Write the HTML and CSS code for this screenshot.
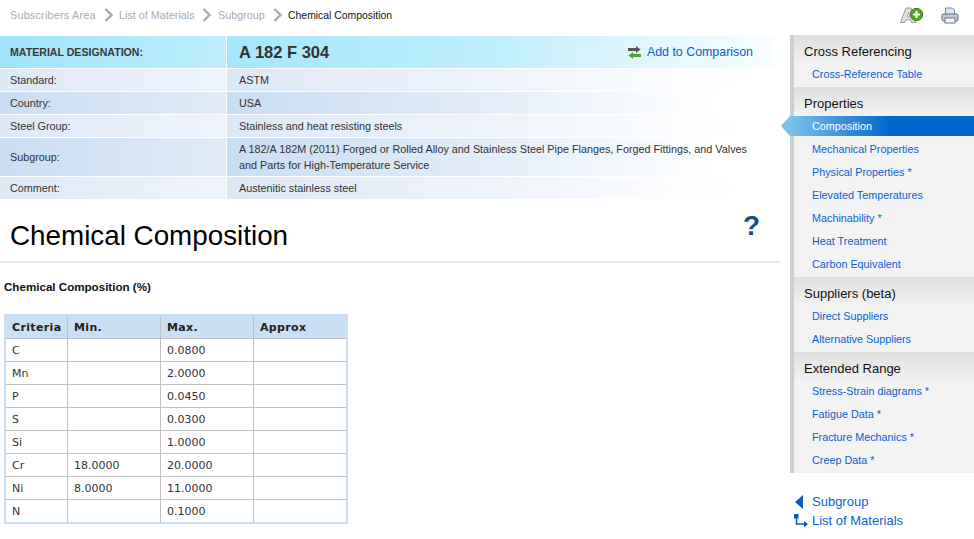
FILE: index.html
```html
<!DOCTYPE html>
<html lang="en">
<head>
<meta charset="utf-8">
<title>Chemical Composition</title>
<link rel="stylesheet" href="styles.css">
</head>
<body>
<header class="topbar">
  <nav class="crumbs">
    <a href="#">Subscribers Area</a>
    <svg class="chev" width="9" height="14" viewBox="0 0 9 14"><path d="M1.500 1 7.500 7 1.500 13" fill="none" stroke="#ababab" stroke-width="2.400"/></svg>
    <a href="#">List of Materials</a>
    <svg class="chev" width="9" height="14" viewBox="0 0 9 14"><path d="M1.500 1 7.500 7 1.500 13" fill="none" stroke="#ababab" stroke-width="2.400"/></svg>
    <a href="#">Subgroup</a>
    <svg class="chev" width="9" height="14" viewBox="0 0 9 14"><path d="M1.500 1 7.500 7 1.500 13" fill="none" stroke="#ababab" stroke-width="2.400"/></svg>
    <span class="here">Chemical Composition</span>
  </nav>
  <div class="tools">
    <svg width="23" height="16" viewBox="0 0 23 16">
      <path d="M.500 15.500 6 1h5l5 14.500h-4.500l-.8-2.700H6l-.9 2.700Z" fill="#e2e2e2" stroke="#9a9a9a"/>
      <path d="M7 9.800h2.800L8.400 5.500Z" fill="#fff" stroke="#9a9a9a" stroke-width=".7"/>
      <circle cx="16.500" cy="7.500" r="6.200" fill="#4da52a" stroke="#34801a"/>
      <path d="M16.500 4v7M13 7.500h7" stroke="#fff" stroke-width="2.200"/>
    </svg>
    <svg width="18" height="17" viewBox="0 0 18 17">
      <path d="M4.500 1h7l2 2v5h-9Z" fill="#d9e8f6" stroke="#6f8cab"/>
      <rect x="1" y="7" width="16" height="7" rx="1.500" fill="#c4c8cc" stroke="#5f6a74"/>
      <rect x="4" y="11" width="10" height="5" fill="#f4f6f8" stroke="#6f7a84"/>
    </svg>
  </div>
</header>

<div class="page">
  <main class="main">
    <section class="info">
      <div class="row head">
        <div class="label">MATERIAL DESIGNATION:</div>
        <div class="value">
          <span class="grade">A 182 F 304</span>
          <a class="compare" href="#">
            <svg width="13" height="13" viewBox="0 0 13 13">
              <path d="M0 2h8V0l4.500 3.500L8 7V5H0Z" fill="#555"/>
              <path d="M13 8H5V6L.5 9.500 5 13v-2h8Z" fill="#54a12c"/>
            </svg>
            Add to Comparison
          </a>
        </div>
      </div>
      <div class="row light"><div class="label">Standard:</div><div class="value">ASTM</div></div>
      <div class="row dark"><div class="label">Country:</div><div class="value">USA</div></div>
      <div class="row light"><div class="label">Steel Group:</div><div class="value">Stainless and heat resisting steels</div></div>
      <div class="row dark tall"><div class="label">Subgroup:</div><div class="value">A 182/A 182M (2011) Forged or Rolled Alloy and Stainless Steel Pipe Flanges, Forged Fittings, and Valves<br>and Parts for High-Temperature Service</div></div>
      <div class="row light"><div class="label">Comment:</div><div class="value">Austenitic stainless steel</div></div>
    </section>

    <div class="title-row">
      <h1>Chemical Composition</h1>
      <span class="help">?</span>
    </div>

    <h2>Chemical Composition (%)</h2>

    <table class="comp">
      <thead>
        <tr><th class="c1">Criteria</th><th class="c2">Min.</th><th class="c3">Max.</th><th class="c4">Approx</th></tr>
      </thead>
      <tbody>
        <tr><td>C</td><td></td><td>0.0800</td><td></td></tr>
        <tr><td>Mn</td><td></td><td>2.0000</td><td></td></tr>
        <tr><td>P</td><td></td><td>0.0450</td><td></td></tr>
        <tr><td>S</td><td></td><td>0.0300</td><td></td></tr>
        <tr><td>Si</td><td></td><td>1.0000</td><td></td></tr>
        <tr><td>Cr</td><td>18.0000</td><td>20.0000</td><td></td></tr>
        <tr><td>Ni</td><td>8.0000</td><td>11.0000</td><td></td></tr>
        <tr><td>N</td><td></td><td>0.1000</td><td></td></tr>
      </tbody>
    </table>
  </main>

  <aside class="side">
    <div class="menu">
      <section class="group">
        <h3>Cross Referencing</h3>
        <a href="#">Cross-Reference Table</a>
      </section>
      <section class="group">
        <h3>Properties</h3>
        <a class="active" href="#">Composition</a>
        <a href="#">Mechanical Properties</a>
        <a href="#">Physical Properties *</a>
        <a href="#">Elevated Temperatures</a>
        <a href="#">Machinability *</a>
        <a href="#">Heat Treatment</a>
        <a href="#">Carbon Equivalent</a>
      </section>
      <section class="group">
        <h3>Suppliers (beta)</h3>
        <a href="#">Direct Suppliers</a>
        <a href="#">Alternative Suppliers</a>
      </section>
      <section class="group">
        <h3>Extended Range</h3>
        <a href="#">Stress-Strain diagrams *</a>
        <a href="#">Fatigue Data *</a>
        <a href="#">Fracture Mechanics *</a>
        <a href="#">Creep Data *</a>
      </section>
    </div>
    <div class="back">
      <a href="#">
        <span class="ico"><svg width="10" height="14" viewBox="0 0 10 14"><path d="M9 0v14L1 7Z" fill="#0a5cc0"/></svg></span>
        Subgroup
      </a>
      <a href="#">
        <span class="ico"><svg width="14" height="14" viewBox="0 0 14 14"><path d="M0 0h4.500v4.500H0Z" fill="#0a5cc0"/><path d="M2.500 4v6h8" fill="none" stroke="#0a5cc0" stroke-width="1.500"/><path d="M10 7 14 10 10 13.500Z" fill="#0a5cc0"/></svg></span>
        List of Materials
      </a>
    </div>
  </aside>
</div>
</body>
</html>
```

FILE: styles.css
```css
* { box-sizing: border-box; }
html, body { margin: 0; padding: 0; }
body {
  width: 974px;
  height: 539px;
  overflow: hidden;
  background: #fff;
  font-family: "Liberation Sans", Arial, sans-serif;
  font-size: 10.800px;
  color: #333;
}
a { text-decoration: none; }

.topbar {
  height: 35px;
  display: flex;
  align-items: center;
  justify-content: space-between;
  padding: 0 15px 5px 10px;
}
.crumbs { display: flex; align-items: center; font-size: 10.800px; }
.crumbs a { color: #aaa; }
.crumbs a:first-child { letter-spacing: .22px; }
.chev { margin: 0 6.500px 0 7.800px; }
.here { color: #111; font-size: 10.400px; }
.tools { display: flex; align-items: center; gap: 18px; }

.page { display: flex; gap: 10px; align-items: flex-start; }
.main { width: 780px; flex: none; padding-top: 1px; }

.row { display: flex; height: 23px; border-bottom: 1px solid #fff; }
.row.tall { height: 39px; }
.row.head { height: 33px; }
.label {
  width: 227px;
  flex: none;
  padding-left: 10px;
  display: flex;
  align-items: center;
  border-right: 1px solid #fff;
}
.value {
  flex: 1;
  padding-left: 12px;
  display: flex;
  flex-wrap: wrap;
  align-items: center;
  align-content: center;
}
.row.tall .value { display: block; line-height: 16px; padding-top: 0; }

.head .label {
  background: linear-gradient(90deg, #9fe3fb, #bdeefd);
  font-size: 10.600px;
  font-weight: bold;
  color: #3a3a3a;
}
.head .value {
  background: linear-gradient(90deg, #a6e6fb 0%, #bdeefd 46%, #dcf5fe 71%, #f6fdff 98%, #fff 100%);
  justify-content: space-between;
  padding-right: 27px;
}
.grade { font-size: 16.500px; font-weight: bold; color: #333; }
.compare {
  display: flex;
  align-items: center;
  gap: 6px;
  font-size: 12.400px;
  color: #0a5fd0;
}
.light .label { background: linear-gradient(90deg, #dee9f7, #eef4fc); }
.light .value { background: linear-gradient(90deg, #dde8f6, #fff 95%); }
.dark .label { background: linear-gradient(90deg, #c9ddf3, #e2ecf8); }
.dark .value { background: linear-gradient(90deg, #c9ddf3, #e2ecf8 45%, #fff 90%); }

.title-row {
  height: 63px;
  display: flex;
  justify-content: space-between;
  padding: 18px 20px 0 10px;
  border-bottom: 2px solid #e6e6e6;
}
h1 {
  margin: 0;
  font-size: 27.800px;
  font-weight: normal;
  line-height: 36px;
  color: #000;
}
.help {
  font-size: 28px;
  font-weight: bold;
  line-height: 24px;
  margin-top: -4px;
  color: #14508f;
}
h2 {
  margin: 17px 0 0 4px;
  font-size: 11.600px;
  line-height: 14px;
  font-weight: bold;
  color: #111;
}
.comp {
  margin: 20px 0 0 4px;
  width: 344px;
  table-layout: fixed;
  border-collapse: separate;
  border-spacing: 0;
  border: 2px solid #c9dff3;
  font-family: "DejaVu Sans", Verdana, sans-serif;
  font-size: 11px;
  color: #333;
}
.comp th, .comp td {
  height: 23px;
  padding: 0 0 0 6px;
  text-align: left;
  border-right: 1px solid #c0c0c0;
  border-bottom: 1px solid #c0c0c0;
  font-weight: normal;
}
.comp tr > :last-child { border-right: 0; }
.comp tbody tr:last-child td { border-bottom: 0; height: 22px; }
.comp th {
  background: #c9dff3;
  font-weight: bold;
  letter-spacing: .35px;
  color: #222;
}
.c1 { width: 62px; }
.c2 { width: 93px; }
.c3 { width: 93px; }

.side { width: 184px; flex: none; }
.menu {
  border-left: 4px solid #d4d4d4;
  border-image: linear-gradient(90deg, #cdcdcd, #e6e6e6) 1;
}
.group { background: linear-gradient(180deg, #dfdfdf 0, #f3f3f3 30px); }
.group h3 {
  margin: 0;
  padding-left: 10px;
  height: 29px;
  line-height: 33px;
  font-size: 13px;
  font-weight: normal;
  color: #111;
}
.group a {
  display: block;
  height: 23px;
  line-height: 21px;
  padding-left: 18px;
  font-size: 10.800px;
  color: #0a5fd0;
}
.group a.active {
  position: relative;
  height: 20px;
  line-height: 20px;
  margin: 0 0 3px -4px;
  padding-left: 22px;
  color: #fff;
  background: linear-gradient(90deg, #7cc1ea, #0066cc 55%);
}
.group a.active::before {
  content: "";
  position: absolute;
  left: -9px;
  top: 0;
  border-style: solid;
  border-width: 10px 9px 10px 0;
  border-color: transparent #7cc1ea transparent transparent;
}
.back { margin-top: 19px; padding-left: 4px; }
.back a {
  display: flex;
  align-items: center;
  height: 19px;
  font-size: 13px;
  color: #0a5fd0;
}
.ico { width: 18px; display: flex; justify-content: flex-start; }
```
